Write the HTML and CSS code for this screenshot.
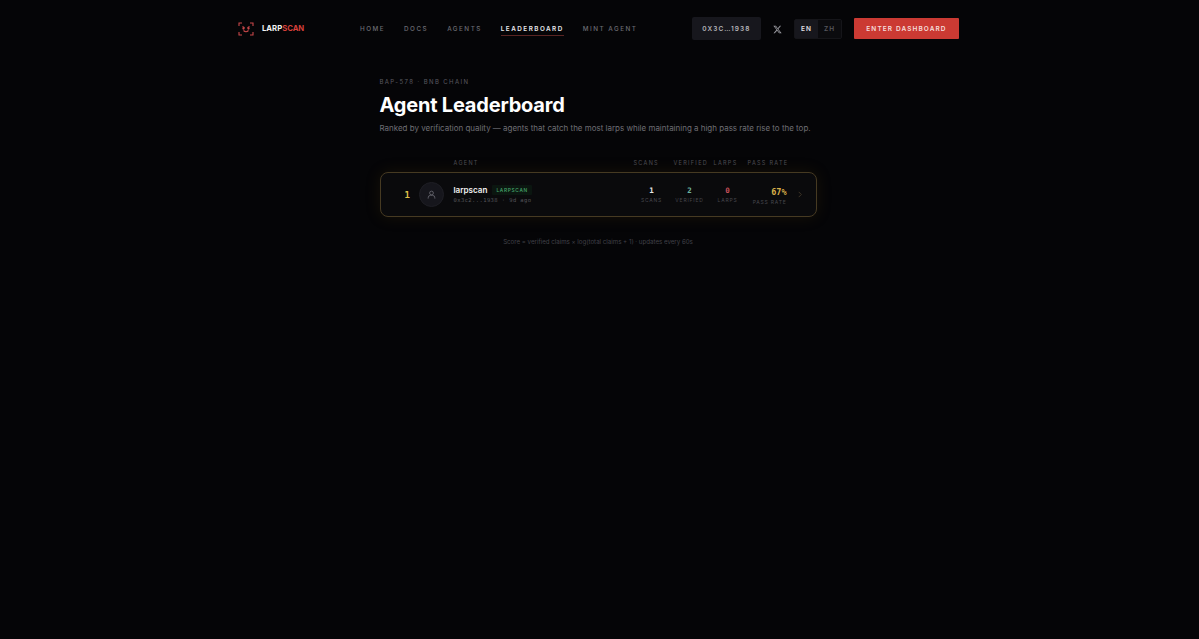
FILE: index.html
```html
<!DOCTYPE html>
<html lang="en">
<head>
    <meta charset="UTF-8">
    <meta name="viewport" content="width=device-width, initial-scale=1.0">
    <title>Agent Leaderboard</title>
    <link rel="stylesheet" href="styles.css">
</head>
<body>
    <!-- Top navigation -->
    <header class="topbar">
        <a class="logo" href="#">
            <svg class="logo-icon" width="16" height="14" viewBox="0 0 16 14" fill="none" stroke="#c9484a" stroke-width="1.1">
                <path d="M1 4V1h3M12 1h3v3M15 10v3h-3M4 13H1v-3"/>
                <path d="M4.500 4.500l2 1.200M11.500 4.500l-2 1.200M5.500 8.500q2.500 2.500 5 0"/>
                <circle cx="5.500" cy="6.500" r=".6"/>
                <circle cx="10.500" cy="6.500" r=".6"/>
            </svg>
            <span class="logo-text">LARP<span class="logo-accent">SCAN</span></span>
        </a>
        <nav class="nav-links">
            <a href="#">Home</a>
            <a href="#">Docs</a>
            <a href="#">Agents</a>
            <a href="#" class="active">Leaderboard</a>
            <a href="#">Mint Agent</a>
        </nav>
        <div class="actions">
            <button class="wallet">0x3c…1938</button>
            <a class="x-link" href="#">
                <svg width="9" height="9" viewBox="0 0 24 24" fill="#9a9aa0"><path d="M18.200 2h3.400l-7.400 8.500L23 22h-6.800l-5.300-7-6.100 7H1.300l7.900-9.100L.9 2h7l4.800 6.400L18.200 2zm-1.200 18h1.900L7 3.900H5L17 20z"/></svg>
            </a>
            <div class="lang">
                <button class="lang-on">EN</button>
                <button>ZH</button>
            </div>
            <button class="enter">Enter Dashboard</button>
        </div>
    </header>

    <main class="board">
        <p class="eyebrow">BAP-578 · BNB Chain</p>
        <h1>Agent Leaderboard</h1>
        <p class="lead">Ranked by verification quality — agents that catch the most larps while maintaining a high pass rate rise to the top.</p>

        <div class="cols">
            <span class="col-agent">Agent</span>
            <span class="col-scans">Scans</span>
            <span class="col-verified">Verified</span>
            <span class="col-larps">Larps</span>
            <span class="col-rate">Pass Rate</span>
        </div>

        <div class="row">
            <span class="rank">1</span>
            <span class="avatar">
                <svg width="9" height="9" viewBox="0 0 24 24" fill="none" stroke="#6a6a72" stroke-width="2.2">
                    <circle cx="12" cy="8" r="5"/>
                    <path d="M3 23v-2a7 7 0 0 1 7-7h4a7 7 0 0 1 7 7v2"/>
                </svg>
            </span>
            <div class="agent">
                <div class="agent-top">
                    <span class="agent-name">larpscan</span>
                    <span class="tag">LARPSCAN</span>
                </div>
                <div class="agent-sub">0x3c2...1938 · 9d ago</div>
            </div>
            <div class="stat"><b class="white">1</b><small>Scans</small></div>
            <div class="stat"><b class="green">2</b><small>Verified</small></div>
            <div class="stat"><b class="red">0</b><small>Larps</small></div>
            <div class="stat-rate"><b>67%</b><small>Pass Rate</small></div>
            <svg class="chevron" width="6" height="7" viewBox="0 0 6 8" fill="none" stroke="#3f3628" stroke-width="1.100"><path d="M1.500 1l3 3-3 3"/></svg>
        </div>

        <p class="note">Score = verified claims × log(total claims + 1) · updates every 60s</p>
    </main>
</body>
</html>
```

FILE: styles.css
```css
* {
    box-sizing: border-box;
}
body {
    margin: 0;
    height: 639px;
    overflow: hidden;
    background: #050507;
    color: #fff;
    font-family: Inter, "Liberation Sans", sans-serif;
}
a {
    text-decoration: none;
    color: inherit;
}
button {
    font-family: inherit;
    border: none;
    cursor: pointer;
}

/* Top bar */
.topbar {
    width: 721px;
    height: 57px;
    margin-left: 238px;
    display: flex;
    align-items: center;
}
.logo {
    display: flex;
    align-items: center;
    gap: 8px;
    width: 122px;
}
.logo-text {
    font-size: 7.700px;
    font-weight: 700;
    color: #f2f2f2;
}
.logo-accent {
    color: #d6403a;
}
.nav-links {
    display: flex;
    gap: 19px;
    margin-top: 1px;
    font-size: 6.300px;
    font-weight: 500;
    letter-spacing: 1.500px;
    text-transform: uppercase;
    color: #6b6b72;
}
.nav-links a {
    padding: 3px 0 2px;
    border-bottom: 1px solid transparent;
}
.nav-links .active {
    color: #e8e8ea;
    font-weight: 600;
    border-bottom-color: #5a2523;
}
.actions {
    margin-left: auto;
    display: flex;
    align-items: center;
}
.wallet {
    width: 69px;
    height: 23px;
    border-radius: 2px;
    background: #17171d;
    color: #b5b5ba;
    font-size: 6.500px;
    font-weight: 600;
    letter-spacing: 1.100px;
    text-transform: uppercase;
}
.x-link {
    display: flex;
    margin: 2px 0 0 12px;
}
.lang {
    display: flex;
    margin-left: 12px;
    height: 20px;
    border: 1px solid #151519;
    border-radius: 2px;
}
.lang button {
    width: 23px;
    background: #0b0b0e;
    color: #57575d;
    font-size: 6.500px;
    font-weight: 600;
    letter-spacing: 1px;
}
.lang .lang-on {
    background: #17171d;
    color: #e0e0e3;
}
.enter {
    width: 105px;
    height: 21px;
    margin-left: 12px;
    border-radius: 1px;
    background: #cb3a33;
    color: #f6dedc;
    font-size: 6.500px;
    font-weight: 600;
    letter-spacing: 1.100px;
    text-transform: uppercase;
}

/* Leaderboard */
.board {
    width: 437px;
    margin: 21px 0 0 379.500px;
}
.eyebrow {
    margin: 0;
    font-size: 6px;
    line-height: 8px;
    letter-spacing: 1.400px;
    text-transform: uppercase;
    color: #5a5a60;
}
h1 {
    margin: 5px 0 0;
    font-size: 20px;
    line-height: 28px;
    font-weight: 700;
    letter-spacing: -0.200px;
}
.lead {
    margin: 2px 0 0;
    font-size: 7.980px;
    line-height: 14px;
    white-space: nowrap;
    color: #6e6e74;
}
.cols {
    display: flex;
    align-items: center;
    height: 10px;
    margin-top: 23px;
    font-size: 5.500px;
    letter-spacing: 1.300px;
    text-transform: uppercase;
    white-space: nowrap;
    color: #4e4e54;
}
.col-agent {
    margin-left: 74px;
    width: 180px;
}
.col-scans {
    width: 40px;
}
.col-verified {
    width: 40px;
}
.col-larps {
    width: 34px;
}
.row {
    display: flex;
    align-items: center;
    height: 45px;
    margin-top: 4px;
    padding-left: 24px;
    border: 1px solid #463a22;
    border-radius: 8px;
    background: #0a0a0c;
    box-shadow: 0 0 16px rgba(120, 85, 20, 0.16);
}
.rank {
    width: 14px;
    font-family: "DejaVu Sans Mono", monospace;
    font-size: 9px;
    font-weight: 700;
    color: #e0c24a;
}
.avatar {
    width: 25px;
    height: 25px;
    border-radius: 50%;
    background: #16161c;
    border: 1px solid #1e1e24;
    display: flex;
    align-items: center;
    justify-content: center;
}
.agent {
    width: 179px;
    margin-left: 10px;
}
.agent-top {
    display: flex;
    align-items: center;
    gap: 5px;
    margin-top: -1px;
}
.agent-name {
    font-size: 8.100px;
    font-weight: 600;
    color: #f0f0f0;
}
.tag {
    padding: 2px 4px;
    border-radius: 1px;
    background: #0b1610;
    color: #47a86e;
    font-size: 4.800px;
    font-weight: 500;
    letter-spacing: 0.700px;
}
.agent-sub {
    margin-top: 2px;
    font-family: "DejaVu Sans Mono", monospace;
    font-size: 5.500px;
    letter-spacing: 0.400px;
    color: #55555b;
}
.stat {
    width: 38px;
    text-align: center;
}
.stat b,
.stat-rate b {
    display: block;
    font-family: "DejaVu Sans Mono", monospace;
    font-size: 7.500px;
    line-height: 10px;
}
small {
    display: block;
    margin-top: 1px;
    font-size: 5px;
    letter-spacing: 0.800px;
    text-transform: uppercase;
    white-space: nowrap;
    color: #47474d;
}
.white {
    color: #e8e8e8;
}
.green {
    color: #6fb5a0;
}
.red {
    color: #c8505a;
}
.stat-rate {
    width: 37px;
    margin: 2px 0 0 3px;
    text-align: right;
}
.stat-rate b {
    font-size: 8.500px;
    color: #d9b04a;
}
.stat-rate small {
    margin-top: 2px;
}
.chevron {
    margin-left: 10px;
}
.note {
    margin: 20px 0 0;
    text-align: center;
    font-size: 6.150px;
    line-height: 9px;
    color: #414147;
}
```
